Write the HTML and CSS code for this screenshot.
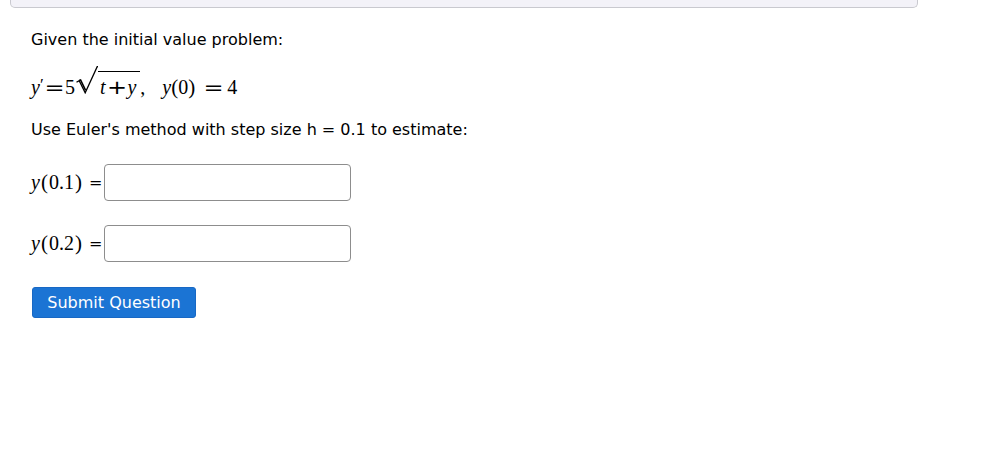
FILE: index.html
```html
<!DOCTYPE html>
<html>
<head>
<meta charset="utf-8">
<link rel="stylesheet" href="styles.css">
</head>
<body>
<div class="topbar"></div>
<div class="question">
  <p class="intro">Given the initial value problem:</p>
  <div class="math eq">
    <span class="mi">y</span><span class="prime">′</span><span class="mo op1">=</span><span class="mn">5</span><span class="sqrt"><svg class="rad" width="22" height="28" viewBox="0 0 22 28"><path d="M0.5 16.2 L3.2 14.6 L9.2 26.8 L21.2 0.7 L22 0.7" fill="none" stroke="#000" stroke-width="1.3" stroke-linejoin="miter"/><path d="M3.2 14.6 L4.6 14 L9.6 24.4" fill="none" stroke="#000" stroke-width="1.6"/></svg><span class="under"><span class="mi">t</span><span class="mo op2">+</span><span class="mi y2">y</span></span></span><span class="comma">,</span><span class="mi">y</span><span class="paren">(</span><span class="mn">0</span><span class="paren">)</span><span class="mo op3">=</span><span class="mn four">4</span>
  </div>
  <p class="intro">Use Euler's method with step size h = 0.1 to estimate:</p>
  <div class="row">
    <span class="math"><span class="mi">y</span><span class="paren">(</span>0.1<span class="paren">)</span></span><span class="eqsign">=</span><input class="answer" type="text">
  </div>
  <div class="row row2">
    <span class="math"><span class="mi">y</span><span class="paren">(</span>0.2<span class="paren">)</span></span><span class="eqsign">=</span><input class="answer" type="text">
  </div>
  <button class="submit">Submit Question</button>
</div>
</body>
</html>
```
FILE: styles.css
```css
html, body {
  margin: 0;
  padding: 0;
  background: #ffffff;
}
body {
  font-family: "DejaVu Sans", Verdana, sans-serif;
  font-size: 16px;
  color: #000;
}
.topbar {
  margin-left: 10px;
  width: 906px;
  height: 7px;
  background: #f3f2f8;
  border: 1px solid #c9c9cf;
  border-top: none;
  border-radius: 0 0 5px 5px;
}
.question {
  padding: 22px 0 0 31px;
}
.intro {
  margin: 0;
  font-size: 16px;
  line-height: 20px;
}
.math {
  font-family: "Liberation Serif", "DejaVu Serif", serif;
  font-size: 20px;
  color: #000;
}
.mi {
  font-style: italic;
}
.eq {
  margin: 16px 0 20px 0;
  height: 34px;
  display: flex;
  align-items: baseline;
  line-height: 20px;
  padding-top: 0;
  box-sizing: border-box;
}
.prime {
  display: inline-block;
  width: 4px;
  font-size: 17px;
  position: relative;
  top: -4px;
}
.mo {
  display: inline-block;
  text-align: center;
  font-family: "DejaVu Sans", sans-serif;
  font-size: 20px;
  font-style: normal;
  transform: scaleX(1.2);
}
.op1 {
  width: 19px;
  margin-left: 1px;
  margin-right: 1px;
}
.op2 {
  width: 18px;
  margin-left: 3px;
  margin-right: 1px;
}
.op3 {
  width: 19px;
  margin-left: 9px;
  margin-right: 4px;
}
.sqrt {
  display: inline-flex;
  align-items: baseline;
  margin-left: 1px;
}
.rad {
  margin-bottom: -6px;
  display: block;
}
.under {
  border-top: 1.3px solid #000;
  padding: 5px 4px 0 2px;
  line-height: 20px;
}
.comma {
  margin-right: 17px;
}
.paren {
  font-size: 21px;
  margin: 0 1px;
}
.eq .paren {
  margin: 0;
}
.row {
  display: flex;
  align-items: center;
  margin-top: 24px;
}
.row2 {
  margin-top: 24px;
}
.eqsign {
  margin: 0 2px 0 6px;
  font-size: 16px;
}
.answer {
  width: 247px;
  height: 37px;
  box-sizing: border-box;
  border: 1px solid #8d8d8d;
  border-radius: 4px;
  padding: 0 6px;
  margin: 0;
  font-size: 16px;
}
.submit {
  margin-top: 25px;
  margin-left: 1px;
  width: 164px;
  height: 31px;
  background: #1b74d4;
  color: #fff;
  border: 1px solid #1868c4;
  border-radius: 3px;
  font-family: "DejaVu Sans", Verdana, sans-serif;
  font-size: 16px;
  padding: 0;
}
```
